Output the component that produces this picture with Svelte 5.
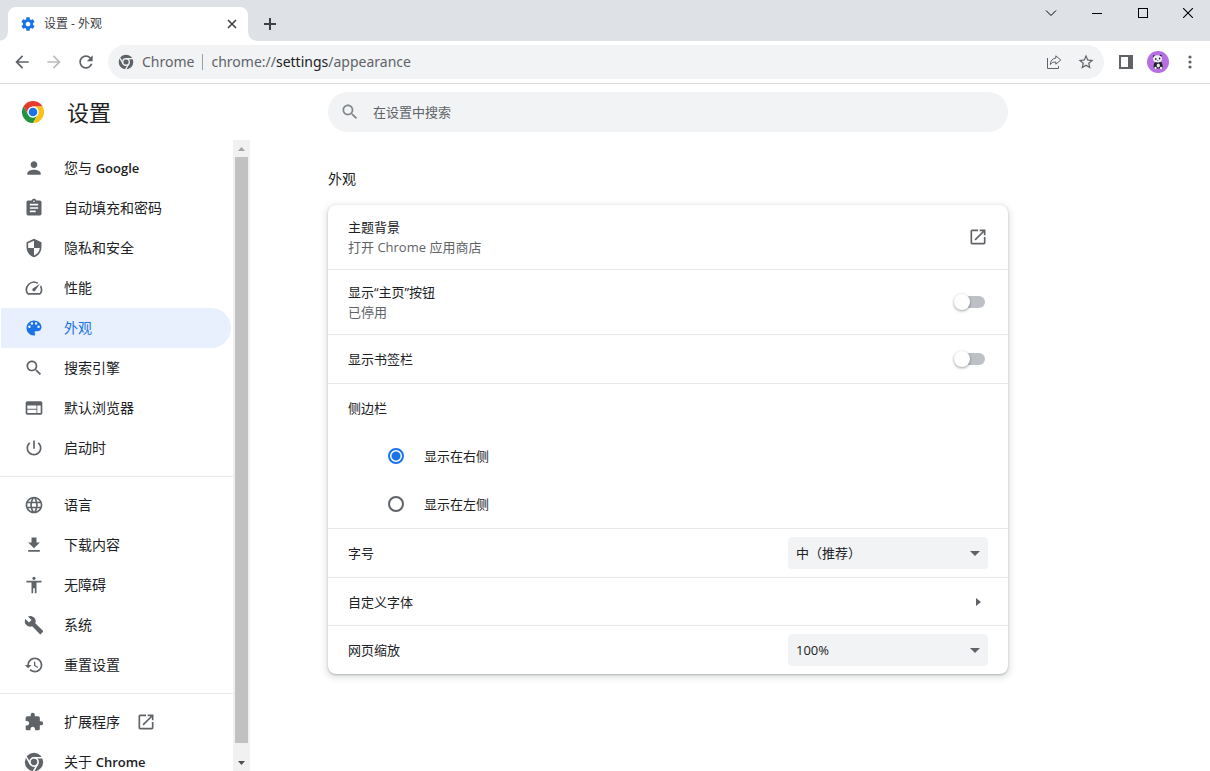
<script lang="ts">
	interface MenuItem {
		id: string;
		label: string;
		latin?: string;
		icon: string;
		external?: boolean;
	}

	const icons: Record<string, string> = {
		person: 'M12 12c2.21 0 4-1.79 4-4s-1.79-4-4-4-4 1.79-4 4 1.79 4 4 4zm0 2c-2.67 0-8 1.34-8 4v2h16v-2c0-2.66-5.33-4-8-4z',
		assignment: 'M19 3h-4.18C14.4 1.84 13.3 1 12 1c-1.3 0-2.4.84-2.82 2H5c-1.1 0-2 .9-2 2v14c0 1.1.9 2 2 2h14c1.1 0 2-.9 2-2V5c0-1.1-.9-2-2-2zm-7 0c.55 0 1 .45 1 1s-.45 1-1 1-1-.45-1-1 .45-1 1-1zm2 14H7v-2h7v2zm3-4H7v-2h10v2zm0-4H7V7h10v2z',
		security: 'M12 1L3 5v6c0 5.55 3.84 10.74 9 12 5.16-1.26 9-6.45 9-12V5l-9-4zm0 10.99h7c-.53 4.12-3.28 7.79-7 8.94V12H5V6.3l7-3.11v8.8z',
		speed: 'M20.38 8.57l-1.23 1.85a8 8 0 0 1-.22 7.58H5.07A8 8 0 0 1 15.58 6.85l1.85-1.23A10 10 0 0 0 3.35 19a2 2 0 0 0 1.72 1h13.85a2 2 0 0 0 1.74-1 10 10 0 0 0-.27-10.44zM10.59 15.41a2 2 0 0 0 2.83 0l5.66-8.49-8.49 5.66a2 2 0 0 0 0 2.83z',
		palette: 'M12 3c-4.97 0-9 4.03-9 9s4.03 9 9 9c.83 0 1.5-.67 1.5-1.5 0-.39-.15-.74-.39-1.01-.23-.26-.38-.61-.38-.99 0-.83.67-1.5 1.5-1.5H16c2.76 0 5-2.24 5-5 0-4.42-4.03-8-9-8zm-5.5 9c-.83 0-1.5-.67-1.5-1.5S5.67 9 6.5 9 8 9.67 8 10.5 7.33 12 6.5 12zm3-4C8.67 8 8 7.33 8 6.5S8.67 5 9.5 5s1.5.67 1.5 1.5S10.33 8 9.5 8zm5 0c-.83 0-1.5-.67-1.5-1.5S13.67 5 14.5 5s1.5.67 1.5 1.5S15.33 8 14.5 8zm3 4c-.83 0-1.5-.67-1.5-1.5S16.67 9 17.5 9s1.5.67 1.5 1.5-.67 1.5-1.5 1.5z',
		search: 'M15.5 14h-.79l-.28-.27C15.41 12.59 16 11.11 16 9.5 16 5.91 13.09 3 9.5 3S3 5.91 3 9.5 5.91 16 9.5 16c1.61 0 3.09-.59 4.23-1.57l.27.28v.79l5 4.99L20.49 19l-4.99-5zm-6 0C7.01 14 5 11.99 5 9.5S7.01 5 9.5 5 14 7.01 14 9.5 11.99 14 9.5 14z',
		web: 'M20 4H4c-1.1 0-1.99.9-1.99 2L2 18c0 1.1.9 2 2 2h16c1.1 0 2-.9 2-2V6c0-1.1-.9-2-2-2zm-5 14H4v-4h11v4zm0-5H4V9h11v4zm5 5h-4V9h4v9z',
		power: 'M13 3h-2v10h2V3zm4.83 2.17l-1.42 1.42C17.99 7.86 19 9.81 19 12c0 3.87-3.13 7-7 7s-7-3.13-7-7c0-2.19 1.01-4.14 2.58-5.42L6.17 5.17C4.23 6.82 3 9.26 3 12c0 4.97 4.03 9 9 9s9-4.03 9-9c0-2.74-1.23-5.18-3.17-6.83z',
		language: 'M11.99 2C6.47 2 2 6.48 2 12s4.47 10 9.99 10C17.52 22 22 17.52 22 12S17.52 2 11.99 2zm6.93 6h-2.95c-.32-1.25-.78-2.45-1.38-3.56 1.84.63 3.37 1.91 4.33 3.56zM12 4.04c.83 1.2 1.48 2.53 1.91 3.96h-3.82c.43-1.43 1.08-2.76 1.91-3.96zM4.26 14C4.1 13.36 4 12.69 4 12s.1-1.36.26-2h3.38c-.08.66-.14 1.32-.14 2 0 .68.06 1.34.14 2H4.26zm.82 2h2.95c.32 1.25.78 2.45 1.38 3.56-1.84-.63-3.37-1.9-4.33-3.56zm2.95-8H5.08c.96-1.66 2.49-2.93 4.33-3.56C8.81 5.55 8.35 6.75 8.03 8zM12 19.96c-.83-1.2-1.48-2.53-1.91-3.96h3.82c-.43 1.43-1.08 2.76-1.91 3.96zM14.34 14H9.66c-.09-.66-.16-1.32-.16-2 0-.68.07-1.35.16-2h4.68c.09.65.16 1.32.16 2 0 .68-.07 1.34-.16 2zm.25 5.56c.6-1.11 1.06-2.31 1.38-3.56h2.95c-.96 1.65-2.49 2.93-4.33 3.56zM16.36 14c.08-.66.14-1.32.14-2 0-.68-.06-1.34-.14-2h3.38c.16.64.26 1.31.26 2s-.1 1.36-.26 2h-3.38z',
		download: 'M19 9h-4V3H9v6H5l7 7 7-7zM5 18v2h14v-2H5z',
		accessibility: 'M12 2c1.1 0 2 .9 2 2s-.9 2-2 2-2-.9-2-2 .9-2 2-2zm9 7h-6v13h-2v-6h-2v6H9V9H3V7h18v2z',
		build: 'M22.7 19l-9.1-9.1c.9-2.3.4-5-1.5-6.9-2-2-5-2.4-7.4-1.3L9 6 6 9 1.6 4.7C.4 7.1.9 10.1 2.9 12.1c1.9 1.9 4.6 2.4 6.9 1.5l9.1 9.1c.4.4 1 .4 1.4 0l2.3-2.3c.5-.4.5-1.1.1-1.4z',
		restore: 'M13 3c-4.97 0-9 4.03-9 9H1l3.89 3.89.07.14L9 12H6c0-3.87 3.13-7 7-7s7 3.13 7 7-3.13 7-7 7c-1.93 0-3.68-.79-4.94-2.06l-1.42 1.42C8.27 19.99 10.51 21 13 21c4.97 0 9-4.03 9-9s-4.03-9-9-9zm-1 5v5l4.28 2.54.72-1.21-3.5-2.08V8H12z',
		extension: 'M20.5 11H19V7c0-1.1-.9-2-2-2h-4V3.5C13 2.12 11.88 1 10.5 1S8 2.12 8 3.5V5H4c-1.1 0-1.99.9-1.99 2v3.8H3.5c1.49 0 2.7 1.21 2.7 2.7s-1.21 2.7-2.7 2.7H2V20c0 1.1.9 2 2 2h3.8v-1.5c0-1.49 1.21-2.7 2.7-2.7 1.49 0 2.7 1.21 2.7 2.7V22H17c1.1 0 2-.9 2-2v-4h1.5c1.38 0 2.5-1.12 2.5-2.5S21.88 11 20.5 11z',
		open: 'M19 19H5V5h7V3H5c-1.11 0-2 .9-2 2v14c0 1.1.89 2 2 2h14c1.1 0 2-.9 2-2v-7h-2v7zM14 3v2h3.59l-9.83 9.83 1.41 1.41L19 6.41V10h2V3h-7z',
		back: 'M20 11H7.83l5.59-5.59L12 4l-8 8 8 8 1.41-1.41L7.83 13H20v-2z',
		forward: 'M12 4l-1.41 1.41L16.17 11H4v2h12.17l-5.58 5.59L12 20l8-8z',
		reload: 'M17.65 6.35C16.2 4.9 14.21 4 12 4c-4.42 0-7.99 3.58-7.99 8s3.57 8 7.99 8c3.73 0 6.84-2.55 7.73-6h-2.08c-.82 2.33-3.04 4-5.65 4-3.31 0-6-2.69-6-6s2.69-6 6-6c1.66 0 3.14.69 4.22 1.78L13 11h7V4l-2.35 2.35z',
		star: 'M22 9.24l-7.19-.62L12 2 9.19 8.63 2 9.24l5.46 4.73L5.82 21 12 17.27 18.18 21l-1.63-7.03L22 9.24zM12 15.4l-3.76 2.27 1-4.28-3.32-2.88 4.38-.38L12 6.1l1.71 4.04 4.38.38-3.32 2.88 1 4.28L12 15.4z',
		gear: 'M19.43 12.98c.04-.32.07-.64.07-.98s-.03-.66-.07-.98l2.11-1.65c.19-.15.24-.42.12-.64l-2-3.46c-.12-.22-.39-.3-.61-.22l-2.49 1c-.52-.4-1.08-.73-1.69-.98l-.38-2.65C14.46 2.18 14.25 2 14 2h-4c-.25 0-.46.18-.49.42l-.38 2.65c-.61.25-1.17.59-1.69.98l-2.49-1c-.23-.09-.49 0-.61.22l-2 3.46c-.13.22-.07.49.12.64l2.11 1.65c-.04.32-.07.65-.07.98s.03.66.07.98l-2.11 1.65c-.19.15-.24.42-.12.64l2 3.46c.12.22.39.3.61.22l2.49-1c.52.4 1.08.73 1.69.98l.38 2.65c.03.24.24.42.49.42h4c.25 0 .46-.18.49-.42l.38-2.65c.61-.25 1.17-.59 1.69-.98l2.49 1c.23.09.49 0 .61-.22l2-3.46c.12-.22.07-.49-.12-.64l-2.11-1.65zM12 15.5c-1.93 0-3.5-1.57-3.5-3.5s1.57-3.5 3.5-3.5 3.5 1.57 3.5 3.5-1.57 3.5-3.5 3.5z'
	};

	const menuGroups: MenuItem[][] = [
		[
			{ id: 'people', label: '您与', latin: 'Google', icon: 'person' },
			{ id: 'autofill', label: '自动填充和密码', icon: 'assignment' },
			{ id: 'privacy', label: '隐私和安全', icon: 'security' },
			{ id: 'performance', label: '性能', icon: 'speed' },
			{ id: 'appearance', label: '外观', icon: 'palette' },
			{ id: 'search', label: '搜索引擎', icon: 'search' },
			{ id: 'defaultBrowser', label: '默认浏览器', icon: 'web' },
			{ id: 'onStartup', label: '启动时', icon: 'power' }
		],
		[
			{ id: 'languages', label: '语言', icon: 'language' },
			{ id: 'downloads', label: '下载内容', icon: 'download' },
			{ id: 'accessibility', label: '无障碍', icon: 'accessibility' },
			{ id: 'system', label: '系统', icon: 'build' },
			{ id: 'reset', label: '重置设置', icon: 'restore' }
		],
		[
			{ id: 'extensions', label: '扩展程序', icon: 'extension', external: true },
			{ id: 'help', label: '关于', latin: 'Chrome', icon: 'chrome' }
		]
	];

	let selected = $state('appearance');
	let showHome = $state(false);
	let showBookmarks = $state(false);
	let panelSide = $state('right');
	let fontSize = $state('medium');
	let zoomLevel = $state('100');
	let query = $state('');
</script>

{#snippet icon(name: string, size = 20)}
	{#if name === 'chrome'}
		<svg class="icon" width={size} height={size} viewBox="0 0 24 24" aria-hidden="true">
			<circle cx="12" cy="12" r="9" fill="none" stroke="currentColor" stroke-width="4" />
			<circle cx="12" cy="12" r="7" fill="none" stroke="currentColor" stroke-width="5" />
			<g class="gap" fill="none" stroke-width="1.8">
				<circle cx="12" cy="12" r="5" />
				<path d="M12 7H22.4M7.67 14.5L2.47 5.5M16.33 14.5L11.13 23.5" />
			</g>
			<circle cx="12" cy="12" r="3.8" fill="currentColor" />
		</svg>
	{:else}
		<svg class="icon" width={size} height={size} viewBox="0 0 24 24" fill="currentColor" aria-hidden="true">
			<path d={icons[name]} />
		</svg>
	{/if}
{/snippet}

<div class="browser">
	<header class="tab-strip">
		<div class="tab">
			{@render icon('gear', 16)}
			<span class="tab-title">设置 - 外观</span>
			<button class="tab-close" aria-label="关闭标签页">
				<svg width="10" height="10" viewBox="0 0 10 10" stroke="currentColor" stroke-width="1.6">
					<path d="M1 1l8 8M9 1l-8 8" />
				</svg>
			</button>
		</div>
		<button class="new-tab" aria-label="新标签页">
			<svg width="12" height="12" viewBox="0 0 12 12" stroke="currentColor" stroke-width="2">
				<path d="M6 0v12M0 6h12" />
			</svg>
		</button>
		<div class="window-controls">
			<button aria-label="搜索标签页">
				<svg width="12" height="12" viewBox="0 0 12 12" fill="none" stroke="currentColor">
					<path d="M1 3.5l5 5 5-5" />
				</svg>
			</button>
			<button aria-label="最小化">
				<svg width="10" height="10" viewBox="0 0 10 10" stroke="currentColor"><path d="M0 5.5h10" /></svg>
			</button>
			<button aria-label="最大化">
				<svg width="10" height="10" viewBox="0 0 10 10" fill="none" stroke="currentColor">
					<rect x="0.5" y="0.5" width="9" height="9" />
				</svg>
			</button>
			<button aria-label="关闭">
				<svg width="10" height="10" viewBox="0 0 10 10" stroke="currentColor" stroke-width="1.1">
					<path d="M0 0l10 10M10 0L0 10" />
				</svg>
			</button>
		</div>
	</header>

	<div class="toolbar">
		<button class="tool" aria-label="后退">{@render icon('back')}</button>
		<button class="tool" aria-label="前进" disabled>{@render icon('forward')}</button>
		<button class="tool" aria-label="重新加载">{@render icon('reload')}</button>
		<div class="omnibox">
			{@render icon('chrome', 16)}
			<span class="site-name">Chrome</span>
			<span class="url" role="textbox" tabindex="0" aria-label="地址栏">chrome://<b>settings</b>/appearance</span>
			<button class="tool" aria-label="分享">
				<svg width="16" height="16" viewBox="0 0 16 16" fill="none" stroke="currentColor">
					<path d="M1.5 4v10.500h11V12" />
					<path d="M9.8 1.8L14.8 6l-5 4.2V8C7.4 7.8 5.6 8.7 4.3 10.6 4.4 7 6.4 4.4 9.8 4.1z" />
				</svg>
			</button>
			<button class="tool" aria-label="为此标签页添加书签">{@render icon('star', 18)}</button>
		</div>
		<button class="tool" aria-label="侧边栏">
			<svg width="14" height="14" viewBox="0 0 14 14" fill="currentColor">
				<path fill-rule="evenodd" d="M0 0h14v14H0zM2 2v10h7V2z" />
			</svg>
		</button>
		<button class="tool" aria-label="个人资料">
			<svg width="22" height="22" viewBox="0 0 22 22">
				<circle cx="11" cy="11" r="11" fill="#b56fe3" />
				<path d="M8 11c-1.5 2-1.7 4.5-1 6.5h8c1-2 .8-4.7-.8-6.5z" fill="#202124" />
				<ellipse cx="11.3" cy="14.6" rx="1.6" ry="2" fill="#e8eaed" />
				<circle cx="7" cy="5.4" r="1.1" fill="#202124" />
				<circle cx="13.6" cy="4.8" r="1.1" fill="#202124" />
				<ellipse cx="10.5" cy="7.8" rx="4.4" ry="3.6" fill="#f1f3f4" />
				<ellipse cx="8.8" cy="8" rx="0.8" ry="0.9" fill="#202124" />
				<ellipse cx="12.6" cy="7.5" rx="0.8" ry="0.9" fill="#202124" />
				<circle cx="10.8" cy="9.5" r="0.5" fill="#202124" />
				<circle cx="8.5" cy="17" r="1.2" fill="#e8eaed" />
				<circle cx="14" cy="17" r="1.2" fill="#e8eaed" />
			</svg>
		</button>
		<button class="tool" aria-label="自定义及控制">
			<svg width="4" height="14" viewBox="0 0 4 14" fill="currentColor">
				<circle cx="2" cy="2" r="1.6" /><circle cx="2" cy="7" r="1.6" /><circle cx="2" cy="12" r="1.6" />
			</svg>
		</button>
	</div>

	<div class="settings">
		<aside class="side">
			<div class="brand">
				<svg width="22" height="22" viewBox="0 0 48 48" aria-hidden="true">
					<path fill="#e33b2e" d="M44.8 12A24 24 0 0 0 3.2 12L13.6 30A12 12 0 0 1 24 12z" />
					<path fill="#229342" d="M3.2 12A24 24 0 0 0 24 48L34.4 30A12 12 0 0 1 13.6 30z" />
					<path fill="#fbc116" d="M24 48A24 24 0 0 0 44.8 12H24A12 12 0 0 1 34.4 30z" />
					<circle cx="24" cy="24" r="12" fill="#fff" />
					<circle cx="24" cy="24" r="9.5" fill="#1a73e8" />
				</svg>
				<h1>设置</h1>
			</div>
			<div class="menu-area">
				<nav class="menu">
					{#each menuGroups as group, i}
						{#if i > 0}
							<hr />
						{/if}
						{#each group as item}
							<a
								href="#{item.id}"
								class="menu-item"
								class:selected={selected === item.id}
								onclick={() => (selected = item.id)}
							>
								{@render icon(item.icon)}
								<span class="label">
									{item.label}
									{#if item.latin}
										<span class="latin">{item.latin}</span>
									{/if}
								</span>
								{#if item.external}
									{@render icon('open')}
								{/if}
							</a>
						{/each}
					{/each}
				</nav>
				<div class="scrollbar" aria-hidden="true">
					<svg width="17" height="17" viewBox="0 0 17 17" fill="#a3a3a3"><path d="M5 11h7L8.5 7z" /></svg>
					<div class="thumb"></div>
					<svg width="17" height="17" viewBox="0 0 17 17" fill="#505050"><path d="M5 7h7l-3.5 4z" /></svg>
				</div>
			</div>
		</aside>

		<main class="content">
			<label class="search">
				{@render icon('search')}
				<input type="text" placeholder="在设置中搜索" aria-label="在设置中搜索" bind:value={query} />
			</label>

			<h2>外观</h2>
			<section class="card">
				<a class="row tall" href="#themes">
					<span class="text">
						<span>主题背景</span>
						<span class="secondary">打开 Chrome 应用商店</span>
					</span>
					{@render icon('open')}
				</a>
				<label class="row tall">
					<span class="text">
						<span>显示“主页”按钮</span>
						<span class="secondary">{showHome ? '已启用' : '已停用'}</span>
					</span>
					<input type="checkbox" class="toggle" bind:checked={showHome} />
				</label>
				<label class="row">
					<span class="text">显示书签栏</span>
					<input type="checkbox" class="toggle" bind:checked={showBookmarks} />
				</label>
				<fieldset>
					<legend>侧边栏</legend>
					<label class="option">
						<input type="radio" name="side" value="right" bind:group={panelSide} />
						显示在右侧
					</label>
					<label class="option">
						<input type="radio" name="side" value="left" bind:group={panelSide} />
						显示在左侧
					</label>
				</fieldset>
				<div class="row">
					<label class="text" for="font-size">字号</label>
					<div class="select">
						<select id="font-size" bind:value={fontSize}>
							<option value="small">小</option>
							<option value="medium">中（推荐）</option>
							<option value="large">大</option>
						</select>
					</div>
				</div>
				<button class="row link">
					<span class="text">自定义字体</span>
					<span class="arrow-right"></span>
				</button>
				<div class="row">
					<label class="text" for="zoom">网页缩放</label>
					<div class="select">
						<select id="zoom" bind:value={zoomLevel}>
							<option value="75">75%</option>
							<option value="100">100%</option>
							<option value="125">125%</option>
						</select>
					</div>
				</div>
			</section>
		</main>
	</div>
</div>

<style>
	:global(body) {
		margin: 0;
		background: #fff;
	}

	.browser {
		height: 100vh;
		display: flex;
		flex-direction: column;
		overflow: hidden;
		font-family: 'Open Sans', 'Noto Sans CJK SC', sans-serif;
		font-size: 13px;
		line-height: 20px;
		color: #202124;
	}

	.browser *,
	.browser *::before,
	.browser *::after {
		box-sizing: border-box;
	}

	button,
	input,
	select {
		font: inherit;
		color: inherit;
		margin: 0;
	}

	button {
		border: none;
		background: none;
		padding: 0;
		cursor: pointer;
	}

	a {
		color: inherit;
		text-decoration: none;
	}

	.icon {
		flex: none;
	}

	.gap {
		stroke: #fff;
	}

	/* Tab strip */
	.tab-strip {
		flex: none;
		height: 41px;
		display: flex;
		background: #dee1e6;
	}

	.tab {
		position: relative;
		width: 240px;
		margin: 7px 8px 0;
		padding: 0 11px 0 12px;
		display: flex;
		align-items: center;
		gap: 8px;
		background: #fff;
		border-radius: 8px 8px 0 0;
		font-size: 12px;
		color: #3c4043;
	}

	/* Curved feet of the active tab */
	.tab::before,
	.tab::after {
		content: '';
		position: absolute;
		bottom: 0;
		width: 8px;
		height: 8px;
	}

	.tab::before {
		left: -8px;
		background: radial-gradient(circle at 0 0, transparent 7px, #fff 8px);
	}

	.tab::after {
		right: -8px;
		background: radial-gradient(circle at 100% 0, transparent 7px, #fff 8px);
	}

	.tab .icon {
		color: #1a73e8;
	}

	.tab-title {
		flex: 1;
	}

	.tab-close,
	.new-tab {
		display: flex;
		align-items: center;
		justify-content: center;
		color: #3c4043;
	}

	.new-tab {
		width: 28px;
		height: 34px;
		margin-top: 7px;
	}

	.window-controls {
		margin-left: auto;
		display: flex;
	}

	.window-controls button {
		width: 46px;
		height: 26px;
		display: flex;
		align-items: center;
		justify-content: center;
		color: #000;
	}

	.window-controls button:last-child {
		width: 44px;
	}

	/* Toolbar */
	.toolbar {
		flex: none;
		display: flex;
		align-items: center;
		gap: 4px;
		padding: 4px 6px 4px 8px;
		border-bottom: 1px solid #dadce0;
	}

	.tool {
		width: 28px;
		height: 28px;
		display: flex;
		align-items: center;
		justify-content: center;
		color: #5f6368;
	}

	.tool:disabled {
		color: #babcbe;
	}

	.omnibox {
		flex: 1;
		height: 34px;
		margin: 0 4px;
		padding: 0 4px 0 10px;
		display: flex;
		align-items: center;
		gap: 4px;
		background: #f1f3f4;
		border-radius: 17px;
		font-family: 'Noto Sans', 'Noto Sans CJK SC', sans-serif;
		font-size: 14px;
		color: #5f6368;
	}

	.omnibox .gap {
		stroke: #f1f3f4;
	}

	.site-name {
		padding: 0 8px 0 4px;
		line-height: 16px;
		border-right: 1px solid #9aa0a6;
	}

	.url {
		flex: 1;
		padding-left: 4px;
	}

	.url b {
		font-weight: 400;
		color: #202124;
	}

	/* Settings page */
	.settings {
		flex: 1;
		min-height: 0;
		display: flex;
	}

	.side {
		flex: none;
		width: 250px;
		display: flex;
		flex-direction: column;
	}

	.brand {
		flex: none;
		height: 56px;
		padding-left: 22px;
		display: flex;
		align-items: center;
		gap: 23px;
	}

	h1 {
		margin: 0;
		font-size: 22px;
		font-weight: 400;
	}

	.menu-area {
		flex: 1;
		min-height: 0;
		display: flex;
	}

	.menu {
		flex: 1;
		padding-top: 8px;
		overflow: hidden;
	}

	.menu-item {
		height: 40px;
		margin: 0 2px 0 1px;
		padding-left: 23px;
		display: flex;
		align-items: center;
		font-size: 14px;
		border-radius: 0 20px 20px 0;
	}

	.label {
		margin: 0 16px 0 20px;
	}

	.latin {
		font-size: 13px;
		font-weight: 600;
	}

	.menu-item .icon {
		color: #5f6368;
	}

	.menu-item.selected {
		background: #e8f0fe;
	}

	.menu-item.selected,
	.menu-item.selected .icon {
		color: #1a73e8;
	}

	hr {
		height: 1px;
		margin: 8px 0;
		border: none;
		background: #e8eaed;
	}

	.scrollbar {
		flex: none;
		width: 17px;
		display: flex;
		flex-direction: column;
		background: #f1f1f1;
	}

	.scrollbar svg {
		flex: none;
	}

	.thumb {
		flex: 1;
		margin: 0 2px 11px;
		background: #c1c1c1;
	}

	.content {
		flex: 1;
		max-width: 758px;
		padding: 8px 0 0 78px;
	}

	.search {
		height: 40px;
		padding: 0 12px;
		display: flex;
		align-items: center;
		gap: 13px;
		background: #f1f3f4;
		border-radius: 20px;
	}

	.search .icon {
		color: #80868b;
	}

	.search input {
		flex: 1;
		padding: 0;
		border: none;
		outline: none;
		background: none;
	}

	.search input::placeholder {
		color: #5f6368;
		opacity: 1;
	}

	h2 {
		margin: 37px 0 16px;
		font-size: 14px;
		font-weight: 400;
	}

	.card {
		border-radius: 8px;
		box-shadow:
			0 1px 2px rgba(60, 64, 67, 0.3),
			0 2px 6px 2px rgba(60, 64, 67, 0.15);
	}

	.row {
		width: 100%;
		min-height: 49px;
		padding: 0 20px;
		display: flex;
		align-items: center;
	}

	.row.tall {
		min-height: 65px;
	}

	.row.tall:first-child {
		min-height: 64px;
	}

	.row.link {
		min-height: 48px;
	}

	.card > * + * {
		border-top: 1px solid #e8eaed;
	}

	.row .text {
		flex: 1;
		display: flex;
		flex-direction: column;
		text-align: left;
	}

	.row .secondary,
	.row .icon {
		color: #5f6368;
	}

	.toggle {
		appearance: none;
		position: relative;
		width: 34px;
		height: 16px;
		cursor: pointer;
	}

	.toggle::before {
		content: '';
		position: absolute;
		inset: 2px 3px;
		border-radius: 6px;
		background: #bdc1c6;
	}

	.toggle::after {
		content: '';
		position: absolute;
		left: 0;
		width: 16px;
		height: 16px;
		border-radius: 50%;
		background: #fff;
		box-shadow: 0 1px 3px rgba(0, 0, 0, 0.4);
	}

	.toggle:checked::before {
		background: #8ab4f8;
	}

	.toggle:checked::after {
		left: 18px;
		background: #1a73e8;
	}

	fieldset {
		margin: 0;
		padding: 0 20px;
		border: none;
	}

	legend {
		float: left;
		width: 100%;
		padding: 0;
		line-height: 48px;
	}

	.option {
		clear: both;
		height: 48px;
		padding-left: 40px;
		display: flex;
		align-items: center;
		gap: 20px;
	}

	.option input {
		appearance: none;
		width: 16px;
		height: 16px;
		border: 2px solid #5f6368;
		border-radius: 50%;
	}

	.option input:checked {
		border-color: #1a73e8;
		background: radial-gradient(circle, #1a73e8 4px, transparent 5px);
	}

	.select {
		position: relative;
		width: 200px;
	}

	.select::after {
		content: '';
		position: absolute;
		top: 14px;
		right: 8px;
		border: 5px solid transparent;
		border-top-color: #5f6368;
		border-bottom: none;
		pointer-events: none;
	}

	select {
		appearance: none;
		display: block;
		width: 100%;
		height: 32px;
		padding: 0 24px 0 8px;
		border: none;
		border-radius: 4px;
		background: #f1f3f4;
	}

	.arrow-right {
		margin-right: 7px;
		border: 4px solid transparent;
		border-left: 5px solid #5f6368;
		border-right: none;
	}
</style>
